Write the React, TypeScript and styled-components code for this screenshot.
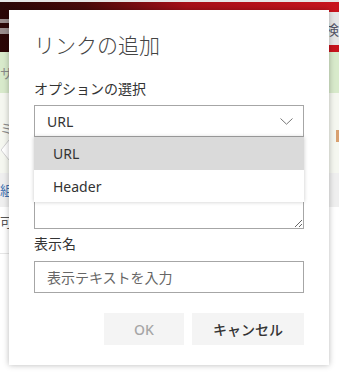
import React from "react";
import styled, { createGlobalStyle } from "styled-components";

const GlobalStyle = createGlobalStyle`
  html, body {
    margin: 0;
    padding: 0;
    background: #ffffff;
  }
  body {
    font-family: "Noto Sans", "Noto Sans CJK JP", sans-serif;
  }
`;

const FONT = `"Noto Sans", "Noto Sans CJK JP", sans-serif`;

const Page = styled.div`
  position: relative;
  width: 339px;
  height: 374px;
  overflow: hidden;
  background: #ffffff;
  display: flex;
  flex-direction: column;
`;

const TopLine = styled.div`
  height: 2px;
  background: #e6e6e6;
`;

const Header = styled.div`
  height: 50px;
  display: flex;
  justify-content: space-between;
  background: linear-gradient(90deg, #2a0606 0%, #4a0a0a 25%, #a60f17 55%, #c8141d 100%);
`;

const Logo = styled.div`
  width: 12px;
  padding-top: 17px;
  display: flex;
  flex-direction: column;
  gap: 5px;
`;

const LogoBar = styled.div<{ $w: number; $h: number }>`
  width: ${(p) => p.$w}px;
  height: ${(p) => p.$h}px;
  background: #9a8c8c;
`;

const Search = styled.div`
  margin-top: 10px;
  height: 33px;
  width: 60px;
  background: #e6e6e6;
  display: flex;
  align-items: center;
  justify-content: flex-end;
  font-size: 14px;
  color: #556;
  font-family: "Noto Sans CJK JP", sans-serif;
`;

const Nav = styled.div`
  height: 41px;
  background: #d8eacb;
  display: flex;
  align-items: center;
`;

const SubBand = styled.div`
  position: relative;
  height: 80px;
  background: #f5f7f0;
  display: flex;
  justify-content: space-between;
`;

const SideChar = styled.div<{ $color?: string }>`
  font-family: "Noto Sans CJK JP", sans-serif;
  font-size: 13px;
  line-height: 18px;
  color: ${(p) => p.$color || "#8a8a8a"};
  white-space: nowrap;
`;

const Pointer = styled.svg`
  position: absolute;
  left: 0;
  top: 46px;
`;

const OrangeMark = styled.div`
  margin-top: 37px;
  width: 3px;
  height: 12px;
  background: #d8a070;
`;

const GrayBand = styled.div`
  height: 34px;
  background: #efefef;
  display: flex;
  align-items: center;
`;

const WhiteArea = styled.div`
  padding-top: 6px;
  display: flex;
  flex-direction: column;
`;

const Rule = styled.div`
  margin-top: 22px;
  width: 40px;
  height: 1px;
  background: #e6e6e6;
`;

const Dialog = styled.div`
  position: absolute;
  left: 9px;
  top: 10px;
  width: 320px;
  height: 355px;
  box-sizing: border-box;
  background: #ffffff;
  box-shadow: 0 0 6px rgba(0, 0, 0, 0.28);
  padding: 21px 25px 20px 25px;
  display: flex;
  flex-direction: column;
  font-family: ${FONT};
  color: #333333;
  z-index: 3;
`;

const Title = styled.div`
  font-size: 21px;
  line-height: 28px;
  font-weight: 300;
  color: #444444;
`;

const Label = styled.div<{ $mt: number }>`
  margin-top: ${(p) => p.$mt}px;
  font-size: 14px;
  line-height: 20px;
  color: #333333;
`;

const SelectWrap = styled.div`
  position: relative;
  margin-top: 6px;
`;

const SelectBox = styled.div`
  height: 32px;
  box-sizing: border-box;
  border: 1px solid #a6a6a6;
  display: flex;
  align-items: center;
  justify-content: space-between;
  padding: 0 10px 0 12px;
  font-size: 14px;
  color: #333333;
`;

const Menu = styled.div`
  position: absolute;
  left: 0;
  top: 32px;
  width: 270px;
  background: #ffffff;
  box-shadow: 0 0 4px rgba(0, 0, 0, 0.22);
  z-index: 2;
`;

const MenuItem = styled.div<{ $selected?: boolean }>`
  height: ${(p) => (p.$selected ? 33 : 32)}px;
  display: flex;
  align-items: center;
  padding-left: 19px;
  font-size: 14px;
  color: #333333;
  background: ${(p) => (p.$selected ? "#dadada" : "#ffffff")};
`;

const TextArea = styled.textarea`
  margin-top: 16px;
  height: 76px;
  box-sizing: border-box;
  border: 1px solid #a6a6a6;
  border-radius: 0;
  resize: vertical;
  outline: none;
  font-family: ${FONT};
`;

const Input = styled.input`
  margin-top: 7px;
  height: 32px;
  box-sizing: border-box;
  border: 1px solid #a6a6a6;
  border-radius: 0;
  padding: 0 12px;
  font-size: 14px;
  font-family: ${FONT};
  outline: none;
  &::placeholder {
    color: #666666;
  }
`;

const Actions = styled.div`
  margin-top: 20px;
  display: flex;
  justify-content: flex-end;
  gap: 8px;
`;

const Button = styled.button<{ $w: number; $disabled?: boolean }>`
  width: ${(p) => p.$w}px;
  height: 32px;
  border: none;
  background: #f4f4f4;
  font-family: ${FONT};
  font-size: 14px;
  font-weight: 500;
  color: ${(p) => (p.$disabled ? "#a6a6a6" : "#333333")};
  padding: 0;
`;

const Chevron = () => (
  <svg width="13" height="7" viewBox="0 0 13 7">
    <path d="M0.5 0.5 L6.5 6.2 L12.5 0.5" fill="none" stroke="#777" strokeWidth="1" />
  </svg>
);

export default function App() {
  return (
    <>
      <GlobalStyle />
      <Page>
        <TopLine />
        <Header>
          <Logo>
            <LogoBar $w={9} $h={4} />
            <LogoBar $w={9} $h={6} />
          </Logo>
          <Search>検</Search>
        </Header>
        <Nav>
          <SideChar>サ</SideChar>
        </Nav>
        <SubBand>
          <SideChar style={{ marginTop: 26 }}>ミ</SideChar>
          <Pointer width="10" height="22" viewBox="0 0 10 22">
            <path d="M10 0 L10 22 L0 11 Z" fill="#ffffff" />
            <path d="M9 1 L1 11 L9 21" fill="none" stroke="#d0d0d0" strokeWidth="1" />
          </Pointer>
          <OrangeMark />
        </SubBand>
        <GrayBand>
          <SideChar $color="#4070b0">組</SideChar>
        </GrayBand>
        <WhiteArea>
          <SideChar $color="#555">可</SideChar>
          <Rule />
        </WhiteArea>

        <Dialog>
          <Title>リンクの追加</Title>
          <Label $mt={20}>オプションの選択</Label>
          <SelectWrap>
            <SelectBox>
              <span>URL</span>
              <Chevron />
            </SelectBox>
            <Menu>
              <MenuItem $selected>URL</MenuItem>
              <MenuItem>Header</MenuItem>
            </Menu>
          </SelectWrap>
          <TextArea readOnly />
          <Label $mt={5}>表示名</Label>
          <Input placeholder="表示テキストを入力" />
          <Actions>
            <Button $w={80} $disabled>OK</Button>
            <Button $w={112}>キャンセル</Button>
          </Actions>
        </Dialog>
      </Page>
    </>
  );
}
